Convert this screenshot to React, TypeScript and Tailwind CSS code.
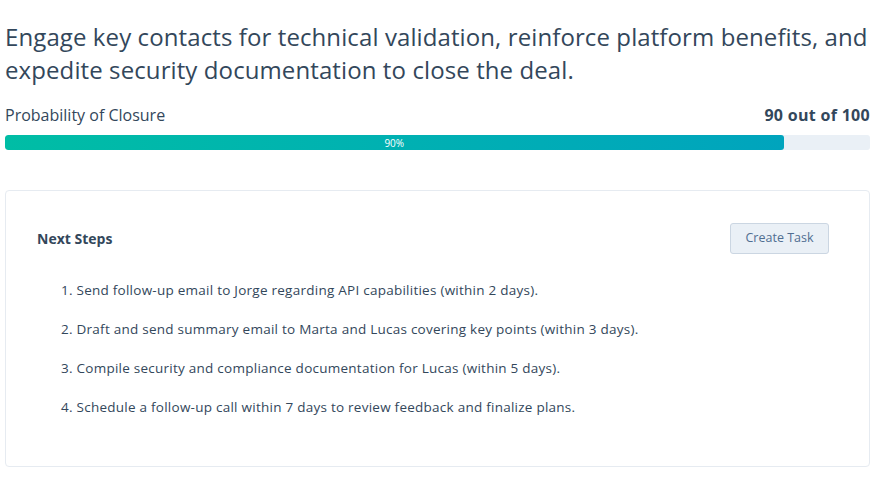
import React from "react";

const steps = [
  "1. Send follow-up email to Jorge regarding API capabilities (within 2 days).",
  "2. Draft and send summary email to Marta and Lucas covering key points (within 3 days).",
  "3. Compile security and compliance documentation for Lucas (within 5 days).",
  "4. Schedule a follow-up call within 7 days to review feedback and finalize plans.",
];

export default function App() {
  return (
    <div
      className="w-[878px] h-[493px] bg-white text-[#33475b] overflow-hidden"
      style={{ fontFamily: '"Open Sans", sans-serif' }}
    >
      <div className="pl-[5px] pr-[8px] pt-[20px]">
        <h1 className="-mr-[6px] text-[24px] leading-[33px] font-normal tracking-[0.1px]">
          Engage key contacts for technical validation, reinforce platform benefits, and expedite security
          documentation to close the deal.
        </h1>
        <div className="mt-[19px] flex items-center justify-between text-[16px] leading-[20px]">
          <span>Probability of Closure</span>
          <span className="font-bold tracking-[0.3px]">90 out of 100</span>
        </div>
        <div className="mt-[10px] h-[15px] w-full rounded-[3px] bg-[#eaf0f6] overflow-hidden">
          <div className="h-full w-[90%] rounded-[3px] bg-gradient-to-r from-[#00bda5] to-[#00a4bd] flex items-center justify-center text-white text-[10px] leading-none">
            90%
          </div>
        </div>
        <div className="mt-[40px] h-[277px] rounded-[4px] border border-[#e6ebf1] px-[31px] pt-[32px]">
          <div className="flex items-center justify-between">
            <span className="text-[14px] font-bold">Next Steps</span>
            <button className="mr-[9px] h-[31px] w-[99px] rounded-[3px] border border-[#cbd6e2] bg-[#eaf0f6] text-[12.5px] text-[#506e91]">
              Create Task
            </button>
          </div>
          <ol className="mt-[26px] pl-[24px] flex flex-col gap-[19px] text-[13.5px] leading-[20px] tracking-[0.25px]">
            {steps.map((s) => (
              <li key={s}>{s}</li>
            ))}
          </ol>
        </div>
      </div>
    </div>
  );
}
